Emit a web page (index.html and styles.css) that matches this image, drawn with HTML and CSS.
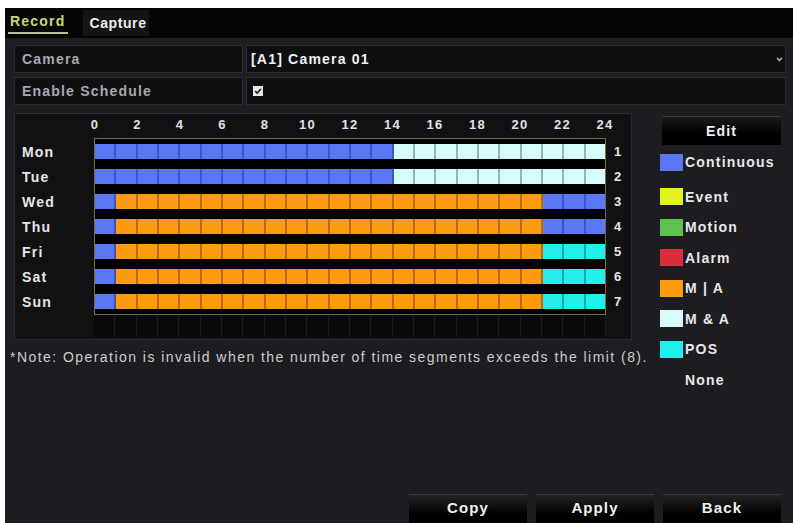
FILE: index.html
```html
<!DOCTYPE html>
<html lang="en">
<head>
    <meta charset="UTF-8">
    <meta name="viewport" content="width=device-width, initial-scale=1.0">
    <title>Record Schedule</title>
    <link rel="stylesheet" href="styles.css">
</head>
<body>
<div class="screen">
    <div class="tabs">
        <span class="tab active">Record</span>
        <span class="tab">Capture</span>
    </div>

    <div class="content">
        <div class="field">
            <div class="field-label">Camera</div>
            <div class="field-value">
                <span>[A1] Camera 01</span>
                <svg class="arrow" width="7" height="5" viewBox="0 0 7 5"><path d="M1 1 L3.5 3.5 L6 1" fill="none" stroke="#bdbdbd" stroke-width="1.4"/></svg>
            </div>
        </div>
        <div class="field field-last">
            <div class="field-label">Enable Schedule</div>
            <div class="field-value">
                <span class="checkbox">
                    <svg width="10" height="10" viewBox="0 0 10 10"><path d="M2.2 5.2 L4.2 7 L7.8 3" fill="none" stroke="#1a1a1a" stroke-width="1.6"/></svg>
                </span>
            </div>
        </div>

        <div class="schedule">
            <div class="schedule-main">
                <div class="sched-panel">
                    <div class="hours">
                        <span>0</span><span>2</span><span>4</span><span>6</span><span>8</span><span>10</span><span>12</span>
                        <span>14</span><span>16</span><span>18</span><span>20</span><span>22</span><span>24</span>
                    </div>
                    <div class="sched-body">
                        <div class="days">
                            <div>Mon</div><div>Tue</div><div>Wed</div><div>Thu</div><div>Fri</div><div>Sat</div><div>Sun</div>
                        </div>
                        <div>
                            <div class="grid-box" id="gridBox"></div>
                            <div class="empty-row" id="emptyRow"></div>
                        </div>
                        <div class="nums">
                            <div>1</div><div>2</div><div>3</div><div>4</div><div>5</div><div>6</div><div>7</div>
                        </div>
                    </div>
                </div>
                <p class="note">*Note: Operation is invalid when the number of time segments exceeds the limit (8).</p>
            </div>

            <div class="legend">
                <div class="edit-btn">Edit</div>
                <div class="legend-item first"><span class="swatch c"></span>Continuous</div>
                <div class="legend-item"><span class="swatch ev"></span>Event</div>
                <div class="legend-item"><span class="swatch mo"></span>Motion</div>
                <div class="legend-item"><span class="swatch al"></span>Alarm</div>
                <div class="legend-item"><span class="swatch mia"></span>M | A</div>
                <div class="legend-item"><span class="swatch ma"></span>M &amp; A</div>
                <div class="legend-item"><span class="swatch pos"></span>POS</div>
                <div class="legend-item"><span class="swatch none"></span>None</div>
            </div>
        </div>

        <div class="actions">
            <button class="btn">Copy</button>
            <button class="btn">Apply</button>
            <button class="btn">Back</button>
        </div>
    </div>
</div>

<script>
    // each day: list of [type, hours]
    const week = [
        [["c", 14], ["ma", 10]],
        [["c", 14], ["ma", 10]],
        [["c", 1], ["mia", 20], ["c", 3]],
        [["c", 1], ["mia", 20], ["c", 3]],
        [["c", 1], ["mia", 20], ["pos", 3]],
        [["c", 1], ["mia", 20], ["pos", 3]],
        [["c", 1], ["mia", 20], ["pos", 3]]
    ];

    const gridBox = document.getElementById("gridBox");
    week.forEach(segments => {
        const row = document.createElement("div");
        row.className = "bar-row";
        const bar = document.createElement("div");
        bar.className = "bar";
        segments.forEach(([type, hours]) => {
            for (let i = 0; i < hours; i++) {
                const cell = document.createElement("div");
                cell.className = "cell " + type;
                bar.appendChild(cell);
            }
        });
        row.appendChild(bar);
        gridBox.appendChild(row);
    });

    const emptyRow = document.getElementById("emptyRow");
    for (let i = 0; i < 24; i++) {
        emptyRow.appendChild(document.createElement("div"));
    }
</script>
</body>
</html>
```

FILE: styles.css
```css
* {
    box-sizing: border-box;
}
body {
    margin: 0;
    background: #ffffff;
    font-family: "Liberation Sans", Arial, sans-serif;
    letter-spacing: 1.2px;
}
.screen {
    margin: 8px 0 0 5px;
    height: 515px;
    background: #1d1c21;
    display: flex;
    flex-direction: column;
    overflow: hidden;
}
.tabs {
    height: 30px;
    background: #050505;
    display: flex;
    align-items: stretch;
    padding-left: 3px;
}
.tab {
    display: flex;
    align-items: center;
    font-size: 14px;
    font-weight: bold;
    color: #eeeeee;
}
.tab.active {
    color: #cdd67a;
    padding: 1px 3px 0 2px;
    margin-bottom: 4px;
    border-bottom: 2px solid #bdbd9c;
}
.tab + .tab {
    margin: 2px 0 2px 15px;
    padding: 0 2px 0 6px;
    background: #141414;
    letter-spacing: 0.6px;
}
.content {
    flex: 1;
    display: flex;
    flex-direction: column;
    padding: 7px 7px 0 9px;
}
.field {
    display: grid;
    grid-template-columns: 229px 1fr;
    gap: 3px;
    height: 28px;
    margin-bottom: 4px;
}
.field-last {
    margin-bottom: 8px;
}
.field-label,
.field-value {
    background: #0f0f12;
    border: 1px solid #2b2b30;
    display: flex;
    align-items: center;
    font-size: 14px;
    font-weight: bold;
}
.field-label {
    color: #a8a8ad;
    padding-left: 7px;
}
.field-value {
    color: #f2f2f2;
    padding: 0 2px 0 4px;
    justify-content: space-between;
}
.checkbox {
    width: 10px;
    height: 10px;
    margin-left: 2px;
    background: #e6e6e6;
    display: flex;
}
.schedule {
    display: flex;
    gap: 10px;
}
.schedule-main {
    width: 631px;
}
.sched-panel {
    width: 618px;
    height: 227px;
    background: #111114;
    border: 1px solid #2a2a2f;
}
.hours {
    display: flex;
    height: 24px;
    padding-top: 3px;
    margin-left: 58.75px;
}
.hours span {
    flex: none;
    width: 42.5px;
    text-align: center;
    font-size: 13px;
    font-weight: bold;
    color: #e2e2e2;
}
.sched-body {
    display: grid;
    grid-template-columns: 79px 512px 1fr;
}
.days,
.nums {
    padding-top: 1px;
}
.days div,
.nums div {
    height: 25px;
    display: flex;
    align-items: center;
    font-size: 14px;
    font-weight: bold;
    color: #e6e6e6;
}
.days div {
    padding-left: 7px;
}
.nums div {
    padding-left: 8px;
    font-size: 13px;
}
.grid-box {
    border: 1px solid #6e6f3c;
    background: #000000;
}
.bar-row {
    height: 25px;
    padding: 5px 0;
}
.bar {
    display: flex;
    height: 15px;
}
.cell {
    flex: 1;
    border-right: 2px solid;
}
.cell:last-child {
    border-right: none;
}
.cell.c {
    background: #5a78f4;
    border-color: #3c54c6;
}
.cell.mia {
    background: #ff9b10;
    border-color: #b76a08;
}
.cell.ma {
    background: #d6fbfb;
    border-color: #8fb7b7;
}
.cell.pos {
    background: #22eeec;
    border-color: #17a9a8;
}
.empty-row {
    display: flex;
    height: 22px;
    background: #09090b;
}
.empty-row div {
    flex: 1;
    border-right: 1px solid #1d1d20;
}
.note {
    margin: 9px 0 0 -4px;
    font-size: 14px;
    color: #cdcdcd;
    letter-spacing: 1.45px;
    white-space: nowrap;
}
.legend {
    width: 130px;
    padding-top: 3px;
}
.edit-btn {
    margin: 0 4px 2px 7px;
    height: 29px;
    background: linear-gradient(#1b1b1b, #000000 60%);
    border-top: 1px solid #3a3a3a;
    display: flex;
    align-items: center;
    justify-content: center;
    color: #f0f0f0;
    font-size: 14px;
    font-weight: bold;
}
.legend-item {
    height: 30.5px;
    display: flex;
    align-items: center;
    padding-left: 5px;
    font-size: 14px;
    font-weight: bold;
    color: #e8e8e8;
}
.legend-item.first {
    margin-bottom: 4px;
}
.swatch {
    width: 23px;
    height: 17px;
    margin-right: 2px;
}
.swatch.c { background: #5a78f4; }
.swatch.ev { background: #e2f31e; }
.swatch.mo { background: #5fc24f; }
.swatch.al { background: #d82f3e; }
.swatch.mia { background: #ff9b10; }
.swatch.ma { background: #d6fbfb; }
.swatch.pos { background: #22eeec; }
.swatch.none { background: transparent; }
.actions {
    margin-top: auto;
    display: flex;
    justify-content: flex-end;
    gap: 9px;
    padding-right: 5px;
}
.btn {
    width: 118px;
    height: 29px;
    padding: 0 0 3px;
    background: linear-gradient(#222222, #000000 70%);
    border: none;
    border-top: 1px solid #3a3a3a;
    color: #f0f0f0;
    font-family: "Liberation Sans", Arial, sans-serif;
    font-size: 15px;
    font-weight: bold;
    letter-spacing: 1.1px;
    cursor: pointer;
}
```
